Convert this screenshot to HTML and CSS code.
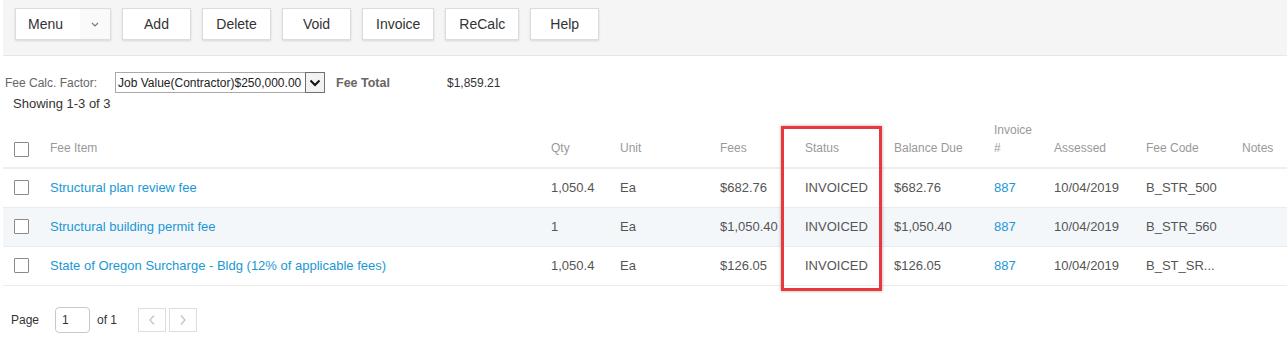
FILE: index.html
```html
<!DOCTYPE html>
<html lang="en">
<head>
    <meta charset="UTF-8">
    <title>Fees</title>
    <link rel="stylesheet" href="styles.css">
</head>
<body>
    <div class="page">
        <div class="toolbar">
            <div class="btn menu">
                <span class="menu-label">Menu</span>
                <span class="menu-caret">
                    <svg width="8" height="5" viewBox="0 0 8 5"><path d="M1 1l3 3 3-3" fill="none" stroke="#777" stroke-width="1.2"/></svg>
                </span>
            </div>
            <div class="btn">Add</div>
            <div class="btn">Delete</div>
            <div class="btn">Void</div>
            <div class="btn">Invoice</div>
            <div class="btn">ReCalc</div>
            <div class="btn">Help</div>
        </div>

        <div class="factor">
            <label class="factor-label">Fee Calc. Factor:</label>
            <div class="select">
                <span class="select-text">Job Value(Contractor)$250,000.00</span>
                <span class="select-arrow">
                    <svg width="12" height="8" viewBox="0 0 12 8"><path d="M1.5 1.5l4.5 4.5 4.5-4.5" fill="none" stroke="#111" stroke-width="2"/></svg>
                </span>
            </div>
            <span class="fee-total">Fee Total</span>
            <span class="fee-amount">$1,859.21</span>
        </div>
        <p class="showing">Showing 1-3 of 3</p>

        <table class="fees">
            <colgroup>
                <col style="width:47px">
                <col style="width:501px">
                <col style="width:69px">
                <col style="width:100px">
                <col style="width:85px">
                <col style="width:89px">
                <col style="width:100px">
                <col style="width:60px">
                <col style="width:92px">
                <col style="width:96px">
                <col style="width:45px">
            </colgroup>
            <thead>
                <tr>
                    <th class="cb"><span class="check"></span></th>
                    <th>Fee Item</th>
                    <th>Qty</th>
                    <th>Unit</th>
                    <th>Fees</th>
                    <th>Status</th>
                    <th>Balance Due</th>
                    <th>Invoice<br>#</th>
                    <th>Assessed</th>
                    <th>Fee Code</th>
                    <th>Notes</th>
                </tr>
            </thead>
            <tbody>
                <tr>
                    <td class="cb"><span class="check"></span></td>
                    <td><a href="#">Structural plan review fee</a></td>
                    <td>1,050.4</td>
                    <td>Ea</td>
                    <td>$682.76</td>
                    <td>INVOICED</td>
                    <td>$682.76</td>
                    <td><a href="#">887</a></td>
                    <td>10/04/2019</td>
                    <td>B_STR_500</td>
                    <td></td>
                </tr>
                <tr class="alt">
                    <td class="cb"><span class="check"></span></td>
                    <td><a href="#">Structural building permit fee</a></td>
                    <td>1</td>
                    <td>Ea</td>
                    <td>$1,050.40</td>
                    <td>INVOICED</td>
                    <td>$1,050.40</td>
                    <td><a href="#">887</a></td>
                    <td>10/04/2019</td>
                    <td>B_STR_560</td>
                    <td></td>
                </tr>
                <tr>
                    <td class="cb"><span class="check"></span></td>
                    <td><a href="#">State of Oregon Surcharge - Bldg (12% of applicable fees)</a></td>
                    <td>1,050.4</td>
                    <td>Ea</td>
                    <td>$126.05</td>
                    <td>INVOICED</td>
                    <td>$126.05</td>
                    <td><a href="#">887</a></td>
                    <td>10/04/2019</td>
                    <td>B_ST_SR...</td>
                    <td></td>
                </tr>
            </tbody>
        </table>

        <div class="pager">
            <span>Page</span>
            <span class="page-input">1</span>
            <span class="page-of">of 1</span>
            <span class="page-btn prev">
                <svg width="8" height="12" viewBox="0 0 8 12"><path d="M6 1.5L2 6l4 4.5" fill="none" stroke="#c4c4c4" stroke-width="1.3"/></svg>
            </span>
            <span class="page-btn next">
                <svg width="8" height="12" viewBox="0 0 8 12"><path d="M2 1.5L6 6l-4 4.5" fill="none" stroke="#c4c4c4" stroke-width="1.3"/></svg>
            </span>
        </div>

        <div class="highlight"></div>
    </div>
</body>
</html>
```

FILE: styles.css
```css
*{
    box-sizing: border-box;
    margin: 0;
    padding: 0;
}
body{
    font-family: "Liberation Sans", Arial, sans-serif;
    color: #333;
    background-color: #fff;
}
.page{
    position: relative;
    margin-left: 3px;
}
.toolbar{
    display: flex;
    gap: 11px;
    height: 56px;
    padding: 8px 12px 0;
    background-color: #f5f5f5;
    border-bottom: 1px solid #e6e6e6;
}
.btn{
    display: flex;
    align-items: center;
    justify-content: center;
    height: 32px;
    min-width: 69px;
    padding: 0 13px;
    background-color: #fff;
    border: 1px solid #dcdcdc;
    box-shadow: 0 1px 2px rgba(0, 0, 0, 0.12);
    font-size: 14px;
    color: #333;
}
.menu{
    width: 96px;
    padding: 0;
    justify-content: flex-start;
}
.menu-label{
    flex: 1;
    padding-left: 12px;
}
.menu-caret{
    display: flex;
    align-items: center;
    justify-content: center;
    width: 30px;
    height: 100%;
    background-color: #fafafa;
}
.factor{
    display: flex;
    align-items: center;
    height: 21px;
    margin-top: 16px;
    padding-left: 2px;
    font-size: 12px;
    color: #666;
}
.factor-label{
    width: 110px;
}
.select{
    display: flex;
    align-items: center;
    width: 210px;
    height: 21px;
    border: 1px solid #a9a9a9;
    background-color: #fff;
}
.select-text{
    flex: 1;
    padding-left: 2px;
    color: #222;
    white-space: nowrap;
}
.select-arrow{
    display: flex;
    align-items: center;
    justify-content: center;
    width: 20px;
    height: 21px;
    margin: -1px -1px -1px 0;
    border: 1px solid #707070;
    background-color: #f2f2f2;
}
.fee-total{
    width: 111px;
    margin-left: 11px;
    font-weight: bold;
    font-size: 12.5px;
}
.fee-amount{
    color: #333;
}
.showing{
    margin-top: 3px;
    padding-left: 10px;
    font-size: 13px;
    line-height: 15px;
    color: #333;
}
.fees{
    width: 1284px;
    margin-top: 10px;
    table-layout: fixed;
    border-collapse: collapse;
}
.fees th{
    height: 46px;
    padding-bottom: 10px;
    vertical-align: bottom;
    text-align: left;
    font-weight: normal;
    font-size: 12px;
    line-height: 18px;
    color: #999;
    border-bottom: 2px solid #efefef;
}
.fees td{
    height: 39px;
    font-size: 13px;
    color: #555;
    white-space: nowrap;
    border-bottom: 1px solid #ebebeb;
}
.fees .cb{
    padding-left: 11px;
}
.fees tr.alt td{
    background-color: #f4f7fa;
}
.fees a{
    color: #1a98d5;
    text-decoration: none;
}
.check{
    display: block;
    width: 15px;
    height: 15px;
    border: 1px solid #8a8a8a;
    border-radius: 1px;
    background-color: #fff;
}
.pager{
    display: flex;
    align-items: center;
    height: 26px;
    margin-top: 21px;
    padding-left: 8px;
    font-size: 12px;
    color: #333;
}
.page-input{
    display: flex;
    align-items: center;
    width: 35px;
    height: 26px;
    margin-left: 16px;
    padding-left: 6px;
    border: 1px solid #c8c8c8;
    border-radius: 4px;
}
.page-of{
    margin-left: 7px;
}
.page-btn{
    display: flex;
    align-items: center;
    justify-content: center;
    width: 28px;
    height: 24px;
    border: 1px solid #dedede;
    background-color: #fff;
}
.prev{
    margin-left: 21px;
}
.next{
    margin-left: 3px;
}
.highlight{
    position: absolute;
    left: 778px;
    top: 126px;
    width: 101px;
    height: 165px;
    border: 3px solid #e8383d;
    box-shadow: 0 0 3px rgba(0, 0, 0, 0.35);
}
```
